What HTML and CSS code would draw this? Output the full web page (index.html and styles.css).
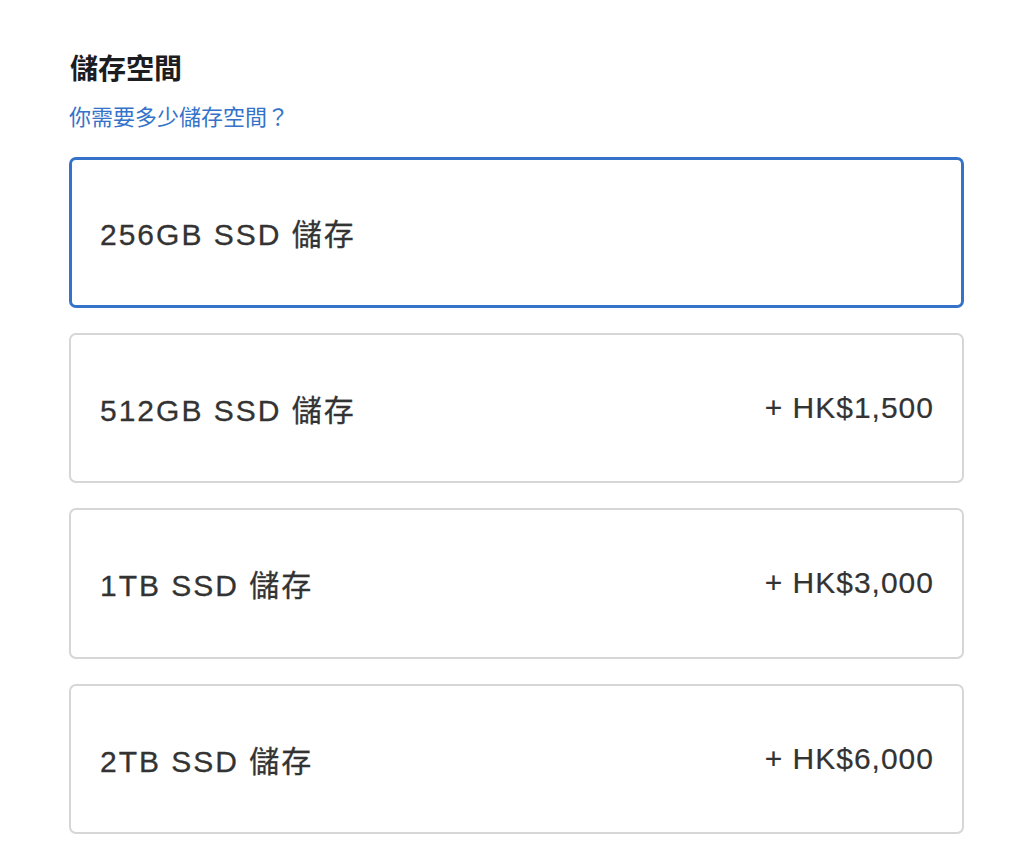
FILE: index.html
```html
<!DOCTYPE html>
<html lang="zh-Hant">
<head>
    <meta charset="UTF-8">
    <title>儲存空間</title>
    <link rel="stylesheet" href="styles.css">
</head>
<body>
    <div class="storage">
        <h2 class="title">儲存空間</h2>
        <a class="help" href="#">你需要多少儲存空間？</a>
        <div class="options">
            <div class="option selected">
                <span class="name">256GB SSD 儲存</span>
            </div>
            <div class="option">
                <span class="name">512GB SSD 儲存</span>
                <span class="price">+ HK$1,500</span>
            </div>
            <div class="option">
                <span class="name">1TB SSD 儲存</span>
                <span class="price">+ HK$3,000</span>
            </div>
            <div class="option">
                <span class="name">2TB SSD 儲存</span>
                <span class="price">+ HK$6,000</span>
            </div>
        </div>
    </div>
</body>
</html>
```

FILE: styles.css
```css
body {
    margin: 0;
    background-color: #fff;
    font-family: "Liberation Sans", "Noto Sans CJK TC", sans-serif;
}

.storage {
    width: 895px;
    padding: 50px 0 0 69px;
}

.title {
    margin: 0;
    font-size: 28px;
    line-height: 40px;
    font-weight: bold;
    color: #1d1d1f;
    padding-left: 1px;
}

.help {
    display: block;
    margin-top: 14px;
    font-size: 22px;
    line-height: 28px;
    color: #3473c9;
    text-decoration: none;
}

.options {
    display: flex;
    flex-direction: column;
    gap: 25px;
    margin-top: 25px;
}

.option {
    box-sizing: border-box;
    height: 150.5px;
    display: flex;
    align-items: center;
    justify-content: space-between;
    padding: 0 28px 0 29px;
    border: 2px solid #d6d6d6;
    border-radius: 7px;
    font-size: 30px;
    letter-spacing: 1px;
    color: #333;
}

.option .name {
    letter-spacing: 2px;
    -webkit-text-stroke: 0.3px #333;
}

.option .price {
    -webkit-text-stroke: 0.2px #333;
}

.option.selected {
    border: 3px solid #3473c9;
    padding: 0 27px 0 28px;
}
```
